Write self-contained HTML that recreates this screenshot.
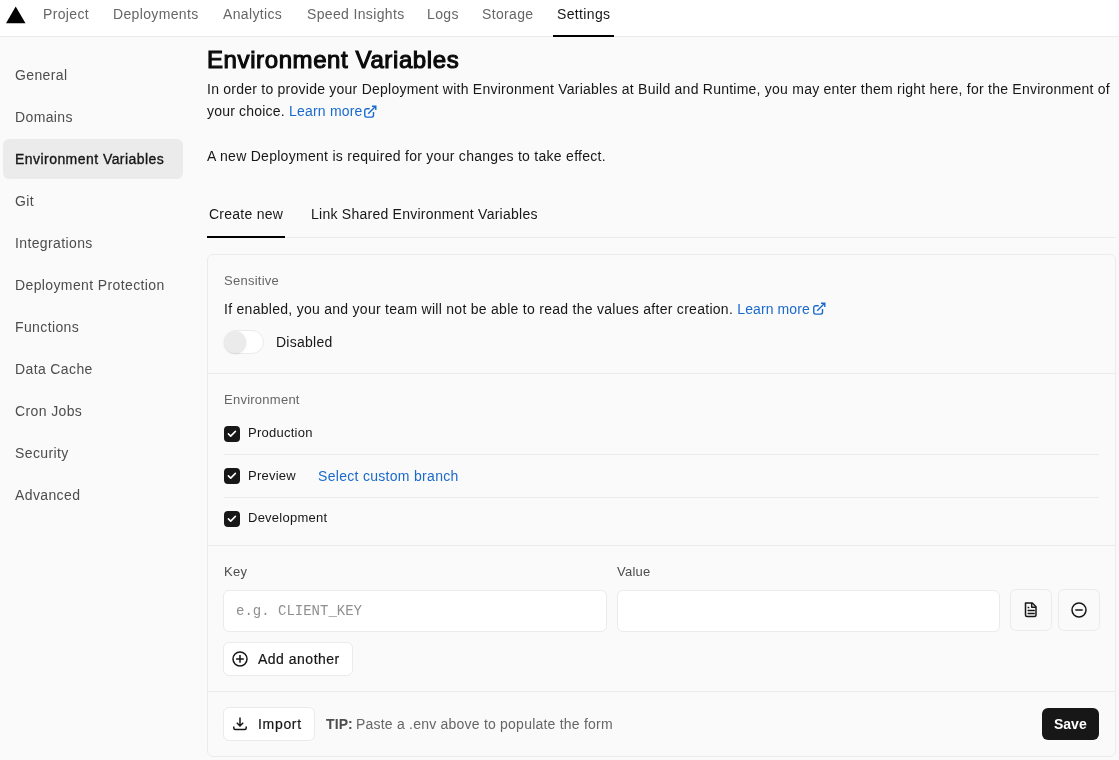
<!DOCTYPE html>
<html><head><meta charset="utf-8">
<style>
*{box-sizing:border-box;margin:0;padding:0}
html,body{width:1119px;height:760px;overflow:hidden;background:#fafafa;font-family:"Liberation Sans",sans-serif;color:#171717}
.abs{position:absolute;white-space:nowrap}
svg.abs{overflow:visible}
#hdr{position:absolute;left:0;top:0;width:1119px;height:37px;background:#fff;border-bottom:1px solid #ebebeb}
.nav{position:absolute;top:4px;font-size:14px;line-height:20px;color:#666;letter-spacing:0.35px}
.side{position:absolute;left:15px;font-size:14px;line-height:20px;color:#4d4d4d;letter-spacing:0.38px}
.t14{font-size:14px;line-height:20px;letter-spacing:0.25px}
.t13{font-size:13px;line-height:18px;letter-spacing:0.25px}
.blue{color:#1a6acd}
.card{position:absolute;left:207px;top:254px;width:909px;height:503px;border:1px solid #ebebeb;border-radius:6px;background:#fafafa}
.hr{position:absolute;height:1px;background:#ebebeb}
.cb{position:absolute;left:224px;width:16px;height:16px;border-radius:4px;background:#171717}
.cb svg{position:absolute;left:0;top:0}
.btn{position:absolute;border:1px solid #ebebeb;border-radius:6px;background:#fff}
</style></head><body><div id="root" style="position:absolute;left:0;top:0;width:1119px;height:760px;will-change:transform">
<div id="hdr">
  <svg class="abs" style="left:5px;top:5px" width="22" height="20" viewBox="0 0 22 20"><path d="M10.7 1.5 L20.5 18.3 L1 18.3 Z" fill="#000"/></svg>
  <div class="nav" style="left:43px">Project</div>
  <div class="nav" style="left:113px">Deployments</div>
  <div class="nav" style="left:223px">Analytics</div>
  <div class="nav" style="left:307px">Speed Insights</div>
  <div class="nav" style="left:427px">Logs</div>
  <div class="nav" style="left:482px">Storage</div>
  <div class="nav" style="left:557px;color:#171717">Settings</div>
  <div class="abs" style="left:553px;top:35px;width:61px;height:2px;background:#000"></div>
</div>

<div class="abs" style="left:3px;top:139px;width:180px;height:40px;border-radius:6px;background:#ebebeb"></div>
<div class="side" style="top:65px">General</div>
<div class="side" style="top:107px">Domains</div>
<div class="side" style="top:149px;color:#171717;-webkit-text-stroke:0.35px #171717;letter-spacing:0.45px">Environment Variables</div>
<div class="side" style="top:191px">Git</div>
<div class="side" style="top:233px">Integrations</div>
<div class="side" style="top:275px">Deployment Protection</div>
<div class="side" style="top:317px">Functions</div>
<div class="side" style="top:359px">Data Cache</div>
<div class="side" style="top:401px">Cron Jobs</div>
<div class="side" style="top:443px">Security</div>
<div class="side" style="top:485px">Advanced</div>

<div class="abs" style="left:207px;top:44px;font-size:24px;line-height:32px;-webkit-text-stroke:1.1px #0a0a0a;color:#0a0a0a;letter-spacing:0.6px">Environment Variables</div>
<div class="abs t14" style="left:207px;top:78px;line-height:22px;letter-spacing:0.24px">In order to provide your Deployment with Environment Variables at Build and Runtime, you may enter them right here, for the Environment of</div>
<div class="abs t14" style="left:207px;top:100px;line-height:22px;letter-spacing:0.2px">your choice. <span class="blue">Learn more</span></div>
<svg class="abs" style="left:363px;top:105px" width="14" height="14" viewBox="0 0 14 14" fill="none" stroke="#1a6acd" stroke-width="1.4"><path d="M6.7 3.7H3.5Q1.75 3.7 1.75 5.5V10.3Q1.75 12.1 3.5 12.1H8.7Q10.5 12.1 10.5 10.3V7"/><path d="M5.2 8.7L12.4 1.5M9 1.2H12.8V5" /></svg>
<div class="abs t14" style="left:207px;top:146px;letter-spacing:0.28px">A new Deployment is required for your changes to take effect.</div>

<div class="abs t14" style="left:209px;top:204px">Create new</div>
<div class="abs t14" style="left:311px;top:204px">Link Shared Environment Variables</div>
<div class="hr" style="left:207px;top:237px;width:909px"></div>
<div class="abs" style="left:207px;top:236px;width:78px;height:2px;background:#000"></div>

<div class="card"></div>
<div class="abs t13" style="left:224px;top:272px;color:#666">Sensitive</div>
<div class="abs t14" style="left:224px;top:299px;letter-spacing:0.28px">If enabled, you and your team will not be able to read the values after creation. <span class="blue" style="letter-spacing:0.1px">Learn more</span></div>
<svg class="abs" style="left:812px;top:302px" width="14" height="14" viewBox="0 0 14 14" fill="none" stroke="#1a6acd" stroke-width="1.4"><path d="M6.7 3.7H3.5Q1.75 3.7 1.75 5.5V10.3Q1.75 12.1 3.5 12.1H8.7Q10.5 12.1 10.5 10.3V7"/><path d="M5.2 8.7L12.4 1.5M9 1.2H12.8V5" /></svg>
<div class="abs" style="left:224px;top:330px;width:40px;height:24px;border-radius:12px;background:#fff;border:1px solid #ebebeb"></div>
<div class="abs" style="left:224px;top:331px;width:22px;height:22px;border-radius:11px;background:#ebebeb;box-shadow:0 1px 2px rgba(0,0,0,0.12)"></div>
<div class="abs t14" style="left:276px;top:332px">Disabled</div>
<div class="hr" style="left:208px;top:373px;width:907px"></div>

<div class="abs t13" style="left:224px;top:391px;color:#666">Environment</div>
<div class="cb" style="top:426px"><svg width="16" height="16" viewBox="0 0 16 16" fill="none" stroke="#fff" stroke-width="1.6" stroke-linecap="round" stroke-linejoin="round"><path d="M4.4 7.9L6.7 10.1L11.4 5.4"/></svg></div>
<div class="abs t13" style="left:248px;top:424px">Production</div>
<div class="hr" style="left:224px;top:454px;width:875px"></div>
<div class="cb" style="top:468px"><svg width="16" height="16" viewBox="0 0 16 16" fill="none" stroke="#fff" stroke-width="1.6" stroke-linecap="round" stroke-linejoin="round"><path d="M4.4 7.9L6.7 10.1L11.4 5.4"/></svg></div>
<div class="abs t13" style="left:248px;top:467px">Preview</div>
<div class="abs t14" style="left:318px;top:466px;letter-spacing:0.3px"><span class="blue">Select custom branch</span></div>
<div class="hr" style="left:224px;top:497px;width:875px"></div>
<div class="cb" style="top:511px"><svg width="16" height="16" viewBox="0 0 16 16" fill="none" stroke="#fff" stroke-width="1.6" stroke-linecap="round" stroke-linejoin="round"><path d="M4.4 7.9L6.7 10.1L11.4 5.4"/></svg></div>
<div class="abs t13" style="left:248px;top:509px">Development</div>
<div class="hr" style="left:208px;top:545px;width:907px"></div>

<div class="abs t13" style="left:224px;top:563px;color:#4d4d4d">Key</div>
<div class="abs t13" style="left:617px;top:563px;color:#4d4d4d">Value</div>
<div class="btn" style="left:223px;top:590px;width:384px;height:42px"></div>
<div class="abs" style="left:236px;top:602px;font-family:'Liberation Mono',monospace;font-size:14px;line-height:18px;color:#8f8f8f">e.g. CLIENT_KEY</div>
<div class="btn" style="left:617px;top:590px;width:383px;height:42px"></div>
<div class="btn" style="left:1010px;top:589px;width:42px;height:42px;background:#fafafa"></div>
<svg class="abs" style="left:1022px;top:601px" width="16" height="16" viewBox="0 0 16 16" fill="none" stroke="#171717" stroke-width="1.5" stroke-linejoin="round"><path d="M3.5 2H10.3L14 5.7V14Q14 15.5 12.5 15.5H5Q3.5 15.5 3.5 14Z"/><path d="M9.7 2V6.3H14"/><path d="M5.6 6.5H7.3M5.6 9.5H12.8M5.6 12.6H12.8"/></svg>
<div class="btn" style="left:1058px;top:589px;width:42px;height:42px;background:#fafafa"></div>
<svg class="abs" style="left:1071px;top:602px" width="16" height="16" viewBox="0 0 16 16" fill="none" stroke="#171717" stroke-width="1.5"><circle cx="8" cy="8" r="7"/><path d="M4.3 8H11.7"/></svg>

<div class="btn" style="left:223px;top:642px;width:130px;height:34px"></div>
<svg class="abs" style="left:232px;top:651px" width="16" height="16" viewBox="0 0 16 16" fill="none" stroke="#171717" stroke-width="1.5"><circle cx="8" cy="8" r="7"/><path d="M4.1 8H11.8M8 4.1V11.8"/></svg>
<div class="abs t14" style="left:258px;top:649px;-webkit-text-stroke:0.2px #171717;letter-spacing:0.5px">Add another</div>
<div class="hr" style="left:208px;top:691px;width:907px"></div>

<div class="btn" style="left:223px;top:707px;width:92px;height:34px"></div>
<svg class="abs" style="left:232px;top:716px" width="16" height="16" viewBox="0 0 16 16" fill="none" stroke="#171717" stroke-width="1.5"><path d="M8 1.5V9.7M4.8 6.8L8 10L11.2 6.8"/><path d="M1.8 10.4V12.1Q1.8 13.6 3.3 13.6H12.7Q14.2 13.6 14.2 12.1V10.4"/></svg>
<div class="abs t14" style="left:258px;top:714px;-webkit-text-stroke:0.2px #171717;letter-spacing:0.68px">Import</div>
<div class="abs t14" style="left:326px;top:714px;color:#666"><b style="color:#4d4d4d;letter-spacing:0.1px">TIP:</b><span style="margin-left:-1px;letter-spacing:0.22px"> Paste a .env above to populate the form</span></div>
<div class="abs" style="left:1042px;top:708px;width:57px;height:32px;border-radius:6px;background:#171717"></div>
<div class="abs t14" style="left:1054px;top:714px;color:#fff;font-weight:bold;letter-spacing:0">Save</div>
</div></body></html>
